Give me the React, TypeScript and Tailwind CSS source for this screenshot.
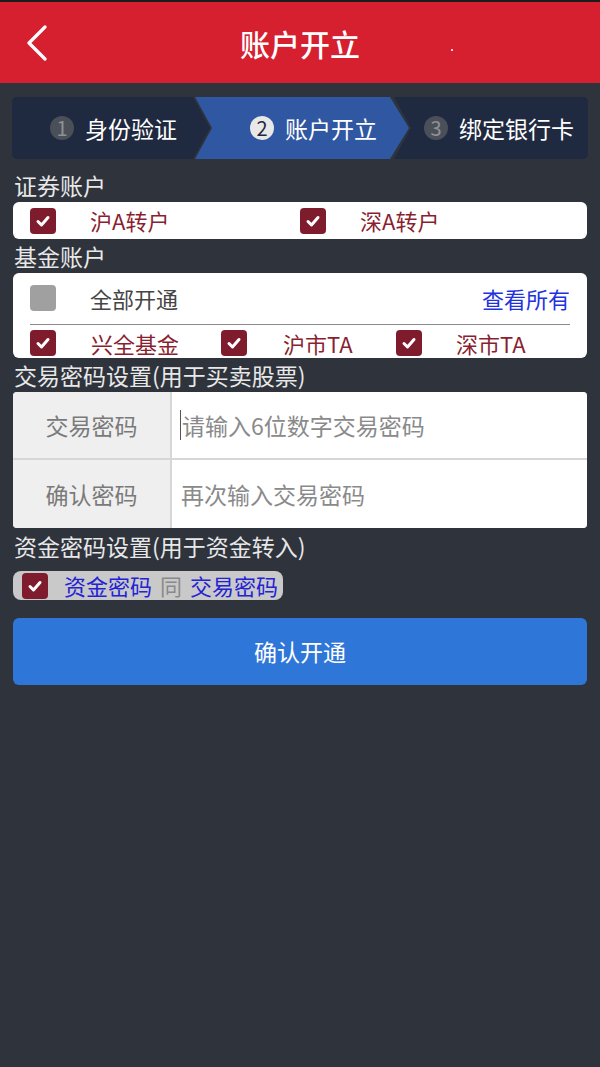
import React from 'react';

const Check = ({ on = true }: { on?: boolean }) => (
  <span
    className={`flex h-[26px] w-[26px] shrink-0 items-center justify-center rounded-[4px] ${
      on ? 'bg-[#7e1c2d]' : 'bg-[#a0a0a0]'
    }`}
  >
    {on && (
      <svg viewBox="0 0 26 26" className="h-[26px] w-[26px]">
        <polyline
          points="8,13.5 11.5,17 18,9.5"
          fill="none"
          stroke="#fff"
          strokeWidth="3"
          strokeLinecap="round"
          strokeLinejoin="round"
        />
      </svg>
    )}
  </span>
);

const StepNum = ({ n, active }: { n: number; active?: boolean }) => (
  <span
    className={`mr-[11px] flex h-[24px] w-[24px] items-center justify-center rounded-full text-[20px] leading-none ${
      active ? 'bg-[#e8e8e8] text-[#1f2a40]' : 'bg-[#4b5058] text-[#8e9298]'
    }`}
  >
    {n}
  </span>
);

const Label = ({ children, className = '' }: { children: React.ReactNode; className?: string }) => (
  <div className={`px-[14px] text-[23px] leading-[28px] text-[#e8e8e8] ${className}`}>{children}</div>
);

export default function App() {
  return (
    <div className="min-h-[1067px] bg-[#2e333c] font-['Noto_Sans_CJK_SC','Noto_Sans',sans-serif]">
      <div className="h-[2px] bg-[#1c1c1c]" />
      {/* header */}
      <div className="relative flex h-[81px] items-center justify-center bg-[#d62030]">
        <svg viewBox="0 0 20 36" className="absolute left-[27px] top-[23px] h-[36px] w-[20px]">
          <polyline
            points="18,2 2,18 18,34"
            fill="none"
            stroke="#fff"
            strokeWidth="3.2"
            strokeLinecap="round"
            strokeLinejoin="round"
          />
        </svg>
        <h1 className="text-[30px] font-medium leading-none text-white">账户开立</h1>
        <span className="absolute left-[451px] top-[47px] h-[2px] w-[2px] bg-white/80" />
      </div>

      <div className="px-[12px] pt-[14px]">
        {/* steps */}
        <div className="flex h-[62px] text-[23px] text-white">
          <div className="flex w-[198px] shrink-0 items-center rounded-l-[5px] bg-[#1f2a40] pl-[38px] [clip-path:polygon(0_0,calc(100%_-_17px)_0,100%_50%,calc(100%_-_17px)_100%,0_100%)]">
            <StepNum n={1} />
            <span>身份验证</span>
          </div>
          <div className="-ml-[15px] flex w-[214px] shrink-0 items-center bg-[#3058a2] pl-[55px] [clip-path:polygon(0_0,calc(100%_-_19px)_0,100%_50%,calc(100%_-_19px)_100%,0_100%,17px_50%)]">
            <StepNum n={2} active />
            <span>账户开立</span>
          </div>
          <div className="-ml-[15px] flex flex-1 items-center rounded-r-[5px] bg-[#1f2a40] pl-[30px] [clip-path:polygon(0_0,100%_0,100%_100%,0_100%,17px_50%)]">
            <StepNum n={3} />
            <span>绑定银行卡</span>
          </div>
        </div>
      </div>

      <Label className="pb-[3px] pt-[12px]">证券账户</Label>
      <div className="mx-[13px] flex h-[37px] items-center rounded-[6px] bg-white pl-[17px] text-[22px] text-[#8a1f31]">
        <div className="flex w-[270px] items-center">
          <Check />
          <span className="ml-[34px]">沪A转户</span>
        </div>
        <div className="flex items-center">
          <Check />
          <span className="ml-[34px]">深A转户</span>
        </div>
      </div>

      <Label className="py-[3px]">基金账户</Label>
      <div className="mx-[13px] h-[85px] rounded-[6px] bg-white px-[17px] pt-[12px] text-[22px]">
        <div className="flex h-[26px] items-center">
          <Check on={false} />
          <span className="ml-[34px] text-[#454545]">全部开通</span>
          <span className="ml-auto text-[#1e32e0]">查看所有</span>
        </div>
        <div className="mt-[13px] h-px bg-[#8a8a8a]" />
        <div className="mt-[5px] flex h-[26px] items-center text-[#8a1f31]">
          <div className="flex w-[191px] items-center">
            <Check />
            <span className="ml-[35px]">兴全基金</span>
          </div>
          <div className="flex w-[175px] items-center">
            <Check />
            <span className="ml-[36px]">沪市TA</span>
          </div>
          <div className="flex items-center">
            <Check />
            <span className="ml-[34px]">深市TA</span>
          </div>
        </div>
      </div>

      <Label className="py-[3px]">交易密码设置(用于买卖股票)</Label>
      <div className="mx-[13px] grid h-[136px] grid-cols-[157px_1fr] grid-rows-[66px_1fr] gap-[2px] overflow-hidden rounded-[4px] bg-[#d6d6d6] text-[23px]">
        <div className="flex items-center justify-center bg-[#efefef] text-[#7a7a7a]">交易密码</div>
        <div className="flex items-center bg-white pl-[8px] text-[#8a8a8a]">
          <span className="mr-px h-[30px] w-px bg-[#555]" />
          请输入6位数字交易密码
        </div>
        <div className="flex items-center justify-center bg-[#efefef] text-[#7a7a7a]">确认密码</div>
        <div className="flex items-center bg-white pl-[9px] text-[#8a8a8a]">再次输入交易密码</div>
      </div>

      <Label className="pb-[11px] pt-[4px]">资金密码设置(用于资金转入)</Label>
      <div className="mx-[13px] flex h-[29px] w-[270px] items-center rounded-[8px] bg-[#c9c9c9] pl-[9px] text-[22px] text-[#2323d4]">
        <Check />
        <span className="ml-[16px]">资金密码</span>
        <span className="ml-[8px] text-[#8a8a8a]">同</span>
        <span className="ml-[8px]">交易密码</span>
      </div>

      <div className="px-[13px] pt-[18px]">
        <button className="flex h-[67px] w-full items-center justify-center rounded-[6px] bg-[#2f76d9] text-[23px] text-white">
          确认开通
        </button>
      </div>
    </div>
  );
}
